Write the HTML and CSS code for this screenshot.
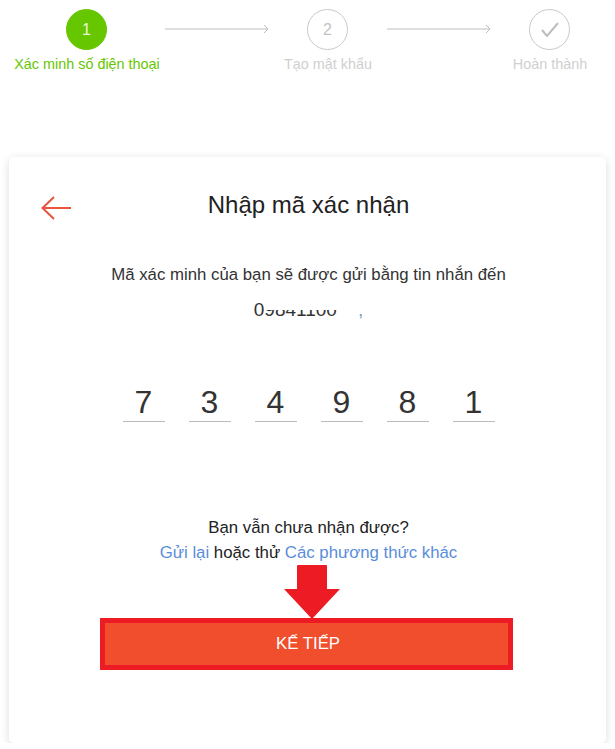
FILE: index.html
```html
<!DOCTYPE html>
<html lang="vi">
<head>
    <meta charset="UTF-8">
    <meta name="viewport" content="width=device-width, initial-scale=1.0">
    <title>Nhập mã xác nhận</title>
    <link rel="stylesheet" href="styles.css">
</head>
<body>
    <header class="stepper">
        <div class="step active">
            <div class="step-circle">1</div>
            <div class="step-label">Xác minh số điện thoại</div>
        </div>
        <svg class="step-arrow" width="104" height="10" viewBox="0 0 104 10">
            <path d="M0 5H103M99 1l4 4-4 4" fill="none" stroke="#bdbdbd"/>
        </svg>
        <div class="step">
            <div class="step-circle">2</div>
            <div class="step-label">Tạo mật khẩu</div>
        </div>
        <svg class="step-arrow" width="104" height="10" viewBox="0 0 104 10">
            <path d="M0 5H103M99 1l4 4-4 4" fill="none" stroke="#bdbdbd"/>
        </svg>
        <div class="step">
            <div class="step-circle">
                <svg width="18" height="15" viewBox="0 0 18 15">
                    <path d="M1 8l5 6L17 1" fill="none" stroke="#bdbdbd" stroke-width="2"/>
                </svg>
            </div>
            <div class="step-label">Hoàn thành</div>
        </div>
    </header>

    <main class="card">
        <div class="card-header">
            <svg class="back-arrow" width="30" height="24" viewBox="0 0 30 24">
                <path d="M30 12H2M13 1L1.500 12 13 23" fill="none" stroke="#e8553c" stroke-width="2"/>
            </svg>
            <h1>Nhập mã xác nhận</h1>
        </div>

        <p class="hint">Mã xác minh của bạn sẽ được gửi bằng tin nhắn đến</p>
        <p class="phone">0<span class="phone-hidden">9841100</span><span class="phone-dot">,</span></p>

        <div class="code">
            <div class="code-cell">7</div>
            <div class="code-cell">3</div>
            <div class="code-cell">4</div>
            <div class="code-cell">9</div>
            <div class="code-cell">8</div>
            <div class="code-cell">1</div>
        </div>

        <p class="resend">Bạn vẫn chưa nhận được?</p>
        <p class="resend-links"><a href="#">Gửi lại</a> hoặc thử <a href="#">Các phương thức khác</a></p>

        <div class="next-wrap">
            <svg class="next-pointer" width="56" height="54" viewBox="0 0 56 54">
                <path d="M13 1q0-1 1-1h28q1 0 1 1v23h13L28 54 0 24h13z" fill="#ed1c24"/>
            </svg>
            <button class="next-button">KẾ TIẾP</button>
        </div>
    </main>
</body>
</html>
```

FILE: styles.css
```css
/* General Styles */
body {
    font-family: 'Liberation Sans', Arial, sans-serif;
    background-color: #ffffff;
    color: #333333;
    margin: 0;
}

p {
    margin: 0;
    text-align: center;
}

/* Stepper */
.stepper {
    display: flex;
    align-items: flex-start;
    padding: 9px 0 0 14px;
    height: 157px;
    box-sizing: border-box;
}

.step {
    display: flex;
    flex-direction: column;
    align-items: center;
    width: 118px;
}

.step.active {
    width: 146px;
    margin-right: 5px;
}

.step-circle {
    width: 41px;
    height: 41px;
    margin-left: -1px;
    box-sizing: border-box;
    border: 1px solid #c9c9c9;
    border-radius: 50%;
    color: #c4c4c4;
    font-size: 16px;
    display: flex;
    align-items: center;
    justify-content: center;
}

.step.active .step-circle {
    background-color: #66c600;
    border-color: #66c600;
    color: #e8f7d6;
}

.step-label {
    margin-top: 5px;
    font-size: 14.4px;
    line-height: 18px;
    white-space: nowrap;
    color: #cfcfcf;
}

.step.active .step-label {
    color: #66c600;
}

.step-arrow {
    flex: none;
    margin-top: 15px;
}

/* Card */
.card {
    width: 597px;
    height: 586px;
    margin-left: 9px;
    box-sizing: border-box;
    background-color: #ffffff;
    border-radius: 5px;
    box-shadow: 0 2px 9px rgba(0, 0, 0, 0.14);
    padding: 33px 0 0 2px;
}

.card-header {
    position: relative;
    height: 30px;
}

.back-arrow {
    position: absolute;
    left: 30px;
    top: 6px;
}

h1 {
    margin: 0;
    font-size: 24px;
    font-weight: normal;
    line-height: 30px;
    text-align: center;
    color: #222222;
}

.hint {
    margin-top: 43px;
    font-size: 16.8px;
    line-height: 24px;
}

.phone {
    margin-top: 11px;
    font-size: 19px;
    line-height: 24px;
}

.phone-hidden {
    display: inline-block;
    clip-path: inset(50% 0 0 0);
}

.phone-dot {
    margin-left: 21px;
    color: #7f9fbd;
}

/* Code inputs */
.code {
    display: flex;
    justify-content: center;
    gap: 24px;
    margin-top: 55px;
}

.code-cell {
    width: 42px;
    height: 44px;
    border-bottom: 1px solid #bbbbbb;
    font-size: 32px;
    line-height: 50px;
    text-align: center;
}

.resend {
    margin-top: 94px;
    font-size: 16.8px;
    line-height: 24px;
    color: #222222;
}

.resend-links {
    font-size: 16.8px;
    line-height: 24px;
    margin-top: 1px;
    color: #222222;
}

.resend-links a {
    color: #5a8ddb;
    text-decoration: none;
}

/* Next button */
.next-wrap {
    position: relative;
    width: 413px;
    margin: 53px 0 0 89px;
}

.next-pointer {
    position: absolute;
    left: 184px;
    top: -53px;
}

.next-button {
    display: block;
    width: 100%;
    height: 52px;
    background-color: #f04e2c;
    border: 5px solid #ed1c24;
    color: #ffffff;
    font-family: inherit;
    font-size: 16.8px;
    padding: 0 0 0 3px;
}
```
